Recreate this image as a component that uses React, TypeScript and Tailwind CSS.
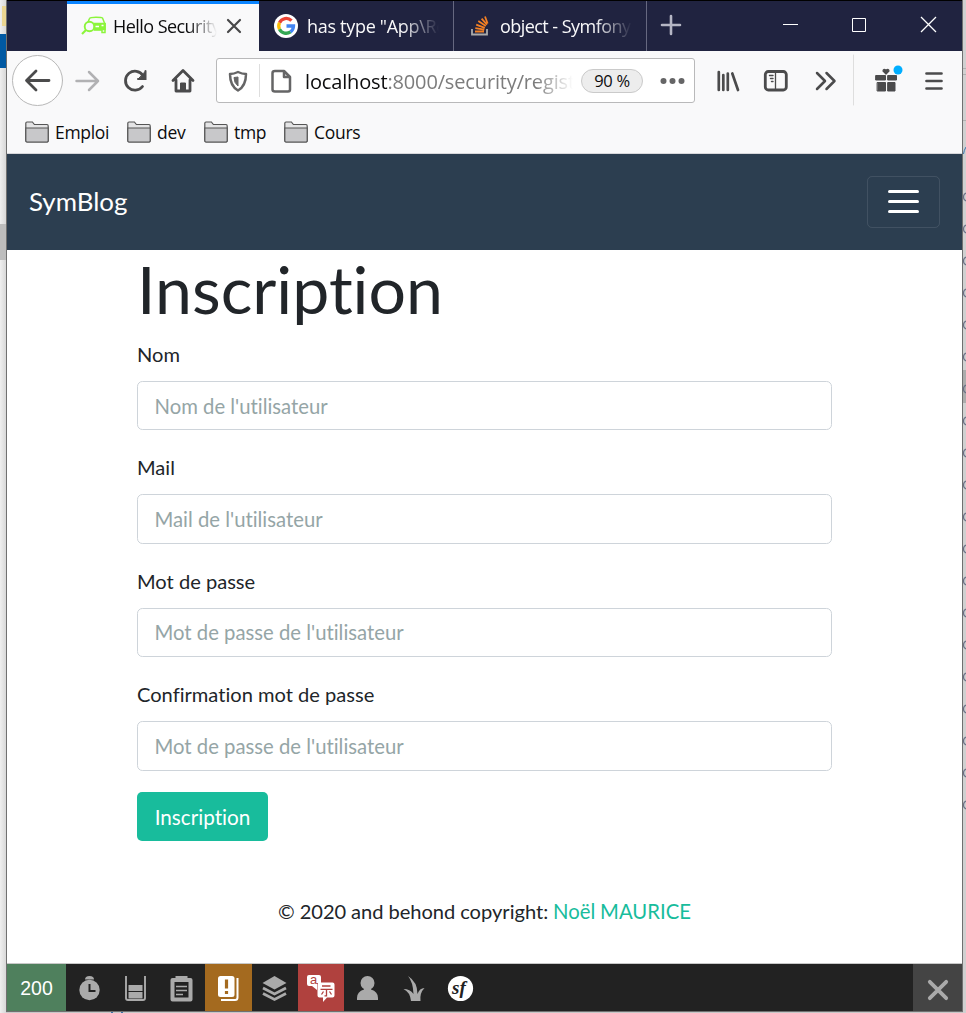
import React from "react";

const Folder = () => (
  <svg width="24" height="22" viewBox="0 0 24 22" className="shrink-0">
    <path d="M.8 19V2.200Q.8 1 2 1h5.400l2 2.500H22Q23.200 3.500 23.200 5v14.500Q23.200 21 22 21H2Q.8 21 .8 19z" fill="#e4e4e5" stroke="#555" strokeWidth="1.200" />
    <path d="M.8 7h22.400v12.500Q23.200 21 22 21H2Q.8 21 .8 19.500z" fill="#c8c8ca" stroke="#555" strokeWidth="1.200" />
  </svg>
);

const Bookmark = ({ label, width }: { label: string; width: string }) => (
  <div className={`flex items-center gap-[6px] ${width}`}>
    <Folder />
    <span className="font-['Open_Sans',sans-serif] text-[17.500px] leading-6 tracking-[-0.300px] text-[#0c0c0d]">{label}</span>
  </div>
);

const Field = ({ label, placeholder }: { label: string; placeholder: string }) => (
  <div className="h-[113.400px]">
    <label className="block h-[40.800px] text-[20.100px] leading-[29.800px]">{label}</label>
    <input
      placeholder={placeholder}
      className="block h-[49.600px] w-full rounded-[5.400px] border border-[#ced4da] bg-white px-[16.500px] text-[20.300px] placeholder:text-[#95a5a6] placeholder:opacity-100"
    />
  </div>
);

const tab =
  "font-['Open_Sans',sans-serif] whitespace-nowrap text-[18px] leading-7 [mask-image:linear-gradient(to_right,#000_72%,transparent)]";

const edgeRows = Array.from({ length: 20 }, (_, i) => 197 + i * 32);

export default function App() {
  return (
    <div className="flex h-[1013px] w-[966px] overflow-hidden bg-[#e6e6e6] font-[Lato,sans-serif] text-[#212529] [font-variant-ligatures:none]">
      <div className="flex w-[6px] shrink-0 flex-col bg-gradient-to-r from-[#efefef] to-[#d8d8d8]">
        <div className="h-[34px] pt-[6px]">
          <div className="ml-[2px] h-[20px] bg-[#ead591]" />
        </div>
        <div className="h-[34px] bg-[#0059a3]" />
        <div className="h-[156px]" />
        <div className="h-[36px] bg-[#bdbdbd]" />
      </div>

      <div className="flex w-[957px] shrink-0 flex-col">
        <div className="flex h-[1012px] flex-col border-x border-b border-[#707070] bg-white">
          <div className="flex h-[51px] shrink-0 border-t border-black bg-[#202340] text-[#f9f9fa]">
            <div className="w-[60px]" />
            <div className="flex w-[192px] items-center border-t-[3px] border-[#0a84ff] bg-[#f9f9fa] pb-[3px] pl-[14px] text-[#0c0c0d]">
              <svg width="26" height="20" viewBox="0 0 26 20" fill="none" stroke="#8cf53b" strokeWidth="1.500">
                <path d="M7 6l1.500-3.500Q9 1.200 15 1.200t6.500.8L23.500 7M24 7v9.500h-3V14h-8" />
                <circle cx="8.500" cy="10.500" r="4.800" strokeWidth="1.900" />
                <path d="M5 14l-4 4" strokeWidth="2.200" />
                <path d="M13.500 7.500h10.500v6H13.500z" fill="#8cf53b" />
                <path d="M14.500 10.500h3.500M20.500 9.500h2" stroke="#fff" />
              </svg>
              <div className={`${tab} ml-[6px] w-[104px] tracking-[-0.550px]`}>Hello Security</div>
              <svg width="16" height="16" viewBox="0 0 16 16" className="ml-[9px]" stroke="#484849" strokeWidth="2.200" strokeLinecap="round"><path d="M2 2l12 12M14 2L2 14" /></svg>
            </div>
            <div className="flex w-[195px] items-center border-r border-[#666880] pl-[15px]">
              <svg width="24" height="24" viewBox="0 0 24 24" fill="none" strokeWidth="3.300">
                <circle cx="12" cy="12" r="12" fill="#fff" />
                <path d="M17.500 6.700A7.400 7.400 0 0 0 5.500 8.800" stroke="#ea4335" />
                <path d="M5.500 8.800a7.400 7.400 0 0 0 0 6.400" stroke="#fbbc05" />
                <path d="M5.500 15.200a7.400 7.400 0 0 0 11 2.600" stroke="#34a853" />
                <path d="M16.500 17.800a7.400 7.400 0 0 0 3-5.800H12.500" stroke="#4285f4" />
              </svg>
              <div className={`${tab} ml-[9px] w-[132px] tracking-[-0.300px]`}>has type "App\Re</div>
            </div>
            <div className="flex w-[193px] items-center border-r border-[#666880] pl-[17px]">
              <svg width="18" height="20" viewBox="0 0 18 20" fill="none" strokeWidth="1.800">
                <path d="M1 13v5.500h15V13" stroke="#aaa" />
                <path d="M4 15.500h9M4.300 12.200l9 1.500M5.200 8.600l8.600 3.200M7.300 5l7.500 5M10.600 2.600l5.400 6M14 .5l2.600 7" stroke="#f48024" />
              </svg>
              <div className={`${tab} ml-[11px] w-[132px] tracking-[-0.550px]`}>object - Symfony</div>
            </div>
            <svg width="22" height="22" viewBox="0 0 22 22" className="ml-[13px] mt-[13px]" stroke="#b5b6c4" strokeWidth="2.600" strokeLinecap="round"><path d="M11 2v18M2 11h18" /></svg>
            <svg width="154" height="18" viewBox="0 0 154 18" className="ml-[101px] mt-[15px]" fill="none" stroke="#fff" strokeWidth="1"><path d="M0 8.500h15M69.500 2.500h13v13h-13z" /><path d="M138 1l15 15M153 1l-15 15" strokeWidth="1.300" /></svg>
          </div>

          <div className="flex h-[60px] shrink-0 items-center bg-[#f9f9fa]">
            <svg width="210" height="60" viewBox="0 0 210 60" fill="none" stroke="#4b4b4c" strokeWidth="2.800" strokeLinecap="round" strokeLinejoin="round" className="shrink-0">
              <circle cx="30.500" cy="29.500" r="25" fill="#fff" stroke="#b8b8b8" strokeWidth="1" />
              <path d="M42 29.500H20M29 20l-9.500 9.500L29 39" />
              <path d="M69.500 30H91M82 21l9 9-9 9" stroke="#b1b1b3" strokeWidth="2.500" />
              <path d="M136 24.500A9.500 9.500 0 1 0 135.500 35.500" />
              <path d="M138.500 20.500v7.500H131.500z" fill="#4b4b4c" strokeWidth="1" />
              <path d="M138.500 20v8H131" strokeLinejoin="miter" strokeWidth="2" />
              <path d="M166 29.500L176 19.500l10 10M169 29v11h14V29" />
              <path d="M173.500 40v-8h5v8" fill="#4b4b4c" strokeWidth="1" />
            </svg>
            <div className="-mt-px -ml-px flex h-[45px] w-[479px] shrink-0 items-center rounded-[3px] border border-[#b9b9ba] bg-white">
              <svg width="78" height="43" viewBox="0 0 78 43" fill="none" stroke="#656566" strokeWidth="2.500" strokeLinejoin="round" className="shrink-0">
                <path d="M21 13q-4 2-8 2 0 12 8 16.500Q29 27 29 15q-4 0-8-2z" />
                <path d="M21 18v9q-4-3-4-8.500z" fill="#656566" strokeWidth="1" />
                <path d="M42.500 5v33" stroke="#dedede" strokeWidth="1" />
                <path d="M58 12h9l6 6v12.500q0 2-2 2H58q-2.500 0-2.500-2V14q0-2 2.500-2zM67 12v6h6" />
              </svg>
              <div className="ml-[10px] w-[268px] whitespace-nowrap pt-[2px] font-['Open_Sans',sans-serif] text-[20px] leading-8 tracking-[-0.150px] text-[#7c7c7c] [mask-image:linear-gradient(to_right,#000_86%,transparent)]">
                <span className="text-[#0c0c0d]">localhost</span>:8000/security/regist
              </div>
              <div className="ml-[8px] flex h-[24px] w-[62px] items-center justify-center rounded-full border border-[#cacaca] bg-[#ededed] pt-[2px] font-['Open_Sans',sans-serif] text-[16.500px] tracking-[-0.300px] text-[#0c0c0d]">90 %</div>
              <svg width="26" height="6" viewBox="0 0 26 6" fill="#656566" className="ml-[17px]"><circle cx="3.500" cy="3" r="3" /><circle cx="12.500" cy="3" r="3" /><circle cx="21.500" cy="3" r="3" /></svg>
            </div>
            <svg width="267" height="60" viewBox="0 0 267 60" fill="none" stroke="#4b4b4c" strokeWidth="2.800" strokeLinecap="round" strokeLinejoin="round" className="shrink-0">
              <path d="M23.800 21v18M28.300 24v15M32.800 22.500V39M37.300 22.500L43 39" strokeWidth="2.700" />
              <rect x="70.300" y="20.500" width="21" height="18.500" rx="3" />
              <path d="M80.500 21v18" strokeWidth="1.300" />
              <path d="M74.500 24.500h3.500M75.500 27.500h2.500M76.500 30.500h1.500" strokeWidth="1.400" />
              <path d="M122 22l8 8-8 8M131.500 22l8 8-8 8" strokeWidth="2.500" />
              <path d="M158.500 4v50" stroke="#dedede" strokeWidth="1" />
              <path d="M181 24.500h9.500v4.500H181zM193 24.500h8.500v4.500H193zM182.500 31.500h8V40h-8zM193 31.500h7V40h-7z" fill="#4b4b4c" strokeWidth="1" />
              <path d="M191 23l-3-3q0-2.500 3-1 3-1.500 3 1z" fill="#4b4b4c" strokeWidth="1.200" />
              <circle cx="203" cy="19" r="4.500" fill="#00aeff" stroke="none" />
              <path d="M231.500 22.500h15M231.500 30h15M231.500 37.500h15" strokeWidth="2.700" />
            </svg>
          </div>

          <div className="flex h-[43px] shrink-0 items-center border-b border-[#d7d7db] bg-[#f9f9fa] pl-[18px]">
            <Bookmark label="Emploi" width="w-[102px]" />
            <Bookmark label="dev" width="w-[77px]" />
            <Bookmark label="tmp" width="w-[80px]" />
            <Bookmark label="Cours" width="w-[90px]" />
          </div>

          <nav className="flex h-[96px] shrink-0 items-center justify-between bg-[#2c3e50] px-[22px]">
            <a className="pb-[2px] text-[25.900px] text-white">SymBlog</a>
            <button className="flex h-[52px] w-[73px] flex-col items-center justify-center gap-[7px] rounded-[5px] border border-white/10 pb-px">
              <span className="h-[3px] w-[31px] rounded bg-white" />
              <span className="h-[3px] w-[31px] rounded bg-white" />
              <span className="h-[3px] w-[31px] rounded bg-white" />
            </button>
          </nav>

          <main className="flex h-[713px] shrink-0 flex-col pl-[130px]">
            <h1 className="h-[90px] text-[66.200px] leading-[78px]">Inscription</h1>
            <form className="w-[695px]">
              <Field label="Nom" placeholder="Nom de l'utilisateur" />
              <Field label="Mail" placeholder="Mail de l'utilisateur" />
              <Field label="Mot de passe" placeholder="Mot de passe de l'utilisateur" />
              <Field label="Confirmation mot de passe" placeholder="Mot de passe de l'utilisateur" />
              <button type="button" className="-mt-[1.600px] flex h-[49px] w-[131px] items-center justify-center rounded-[5px] bg-[#18bc9c] pt-[2px] text-[20.700px] text-white">Inscription</button>
            </form>
            <footer className="mt-[55px] w-[695px] text-center text-[20.100px] leading-[30px] [word-spacing:-0.300px]">
              © 2020 and behond copyright: <a className="text-[20.300px] text-[#18bc9c]">Noël MAURICE</a>
            </footer>
          </main>

          <div className="flex h-[48px] shrink-0 border-t border-[#c8c8c8] bg-[#222]">
            <div className="flex w-[59px] items-center justify-center bg-[#4f805d] pt-[2px] font-['Liberation_Sans',sans-serif] text-[19.500px] text-white">200</div>
            <svg width="139" height="47" viewBox="0 0 139 47" fill="#aaa" className="shrink-0">
              <path d="M19 15.500q0-3.500 4.500-3.500t4.500 3.500z" />
              <circle cx="23.500" cy="26" r="10.200" />
              <path d="M23.500 20v7h6" fill="none" stroke="#222" strokeWidth="2" />
              <path d="M60 12v22q0 2 2 2h15q2 0 2-2V12" fill="none" stroke="#aaa" strokeWidth="1.900" />
              <path d="M62.500 21h14v6h-14zM62.500 28h14v6.500h-14z" />
              <path d="M106.500 16h18v19.500h-18z" fill="none" stroke="#aaa" strokeWidth="4" strokeLinejoin="round" />
              <path d="M109.500 12h12v6h-12z" />
              <path d="M110 22.500h11M110 26.500h11M110 30.500h7" stroke="#aaa" strokeWidth="1.700" />
            </svg>
            <div className="w-[47px] bg-[#a46a1f]">
              <svg width="47" height="47" viewBox="0 0 47 47" fill="none"><rect x="13" y="12" width="16.500" height="21" rx="2.500" fill="#fff" /><path d="M32.500 14v19.500q0 2.500-2.500 2.500H16" stroke="#fff" strokeWidth="2" /><path d="M21.500 15.500v9M21.500 27v3" stroke="#a46a1f" strokeWidth="3.200" /></svg>
            </div>
            <svg width="46" height="47" viewBox="0 0 46 47" fill="none" stroke="#aaa" strokeWidth="2.800"><path d="M10.500 19l12-7 12 7-12 6.500z" fill="#aaa" stroke="none" /><path d="M11 24l11.500 6L34 24M11 29.500l11.500 6 11.500-6" /></svg>
            <div className="w-[46px] bg-[#b0413e]">
              <svg width="46" height="47" viewBox="0 0 46 47" fill="#fff">
                <path d="M11 11h10q2 0 2 2v6h-4v7l-5-4h-3q-2 0-2-2v-7q0-2 2-2z" />
                <path d="M21.500 18.500h13q2 0 2 2v11q0 2-2 2H29l-4 4.500v-4.500h-3.500q-2 0-2-2v-11q0-2 2-2z" />
                <text x="12" y="20" fontSize="13" fill="#b0413e" fontFamily="Liberation Sans">a</text>
                <path d="M24 22h8.500M22.500 25.300h12M28.500 25.300v6.500h-2M25.500 27.500l-2 3M31.500 27.500l2 3" fill="none" stroke="#b0413e" strokeWidth="1.300" />
              </svg>
            </div>
            <svg width="139" height="47" viewBox="0 0 139 47" fill="#aaa" className="shrink-0">
              <circle cx="23.500" cy="19" r="7" /><path d="M13 36v-2q0-6.500 7-8.500v-3h7v3q7 2 7 8.500v2z" />
              <path d="M67 37q-1-9-7.500-12 6.500 0 10 5-.5-12-5.500-18 9.500 6 9.500 18 2-6 7-6-5 5-4 13z" />
              <circle cx="116.500" cy="24.500" r="12.600" fill="#fff" />
              <text x="108" y="30" fontSize="19" fontStyle="italic" fontWeight="700" fill="#222" fontFamily="Liberation Serif, serif">sf</text>
            </svg>
            <div className="ml-auto flex w-[49px] items-center justify-center bg-[#444]">
              <svg width="22" height="22" viewBox="0 0 22 22" className="mt-[5px]" stroke="#aaa" strokeWidth="3.800" strokeLinecap="round"><path d="M2.800 2.800l16.400 16.400M19.200 2.800L2.800 19.200" /></svg>
            </div>
          </div>
        </div>
        <div className="flex h-px bg-[#c8c8c8] pl-[105px]">
          <div className="h-px w-[2px] bg-[#3b6ea5]" />
          <div className="ml-[8px] h-px w-[2px] bg-[#3b6ea5]" />
        </div>
      </div>

      <svg width="3" height="1013" viewBox="0 0 3 1013" className="shrink-0" fill="none">
        <rect width="3" height="1013" fill="#d0d0d0" />
        <path d="M0 68.500h3M0 74.500h3M0 120.500h3" stroke="#b0b0b0" />
        <rect y="370" width="3" height="33" fill="#acacac" />
        <path d="M.5 154q.5-4 2.500-7" stroke="#3b77b0" />
        {edgeRows.map((y) => (
          <path key={y} d={`M3 ${y - 4}q-2.500 1-2.500 4t2.500 4`} stroke="#6a6f86" strokeWidth="1.200" />
        ))}
      </svg>
    </div>
  );
}
